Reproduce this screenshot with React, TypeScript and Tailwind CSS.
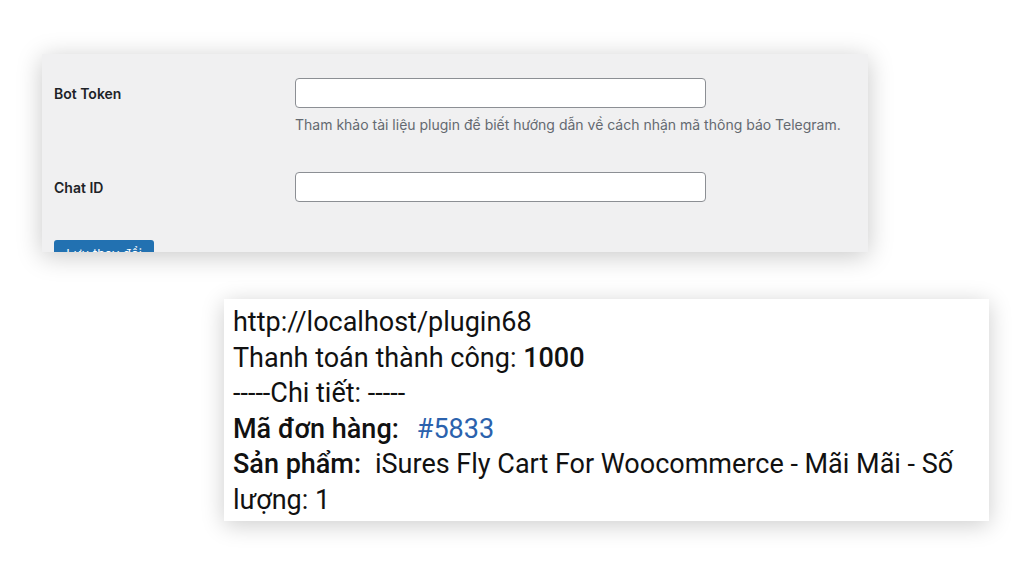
export default function App() {
  return (
    <div className="relative h-[576px] w-[1024px] overflow-hidden bg-white">
      <div className="absolute left-[42px] top-[54px] h-[198px] w-[826px] overflow-hidden bg-[#f0f0f1] px-3 pt-6 shadow-[0_4px_24px_rgba(0,0,0,0.22)] font-['Inter',sans-serif] text-[#1d2327]">
        <div className="flex">
          <div className="flex h-[30px] w-[241px] items-center text-[14px] font-semibold">Bot Token</div>
          <div>
            <div className="h-[30px] w-[411px] rounded-[4px] border border-[#8c8f94] bg-white" />
            <p className="mt-[6px] text-[14px] text-[#646970]">
              Tham khảo tài liệu plugin để biết hướng dẫn về cách nhận mã thông báo Telegram.
            </p>
          </div>
        </div>
        <div className="mt-[37px] flex">
          <div className="flex h-[30px] w-[241px] items-center text-[14px] font-semibold">Chat ID</div>
          <div className="h-[30px] w-[411px] rounded-[4px] border border-[#8c8f94] bg-white" />
        </div>
        <button className="mt-[38px] h-[30px] w-[100px] rounded-[3px] bg-[#2271b1] text-[13px] text-white">
          Lưu thay đổi
        </button>
      </div>

      <div className="absolute left-[224px] top-[299px] h-[222px] w-[765px] bg-white pl-[9px] pt-[6px] shadow-[0_4px_22px_rgba(0,0,0,0.2)] font-['Roboto',sans-serif] text-[27px] leading-[35.6px] text-[#111]">
        <div>http://localhost/plugin68</div>
        <div>
          Thanh toán thành công: <span className="font-medium">1000</span>
        </div>
        <div>-----Chi tiết: -----</div>
        <div>
          <span className="font-medium">Mã đơn hàng:</span>
          <span className="ml-[18px] text-[#2b62ad]">#5833</span>
        </div>
        <div>
          <span className="font-medium">Sản phẩm:</span>
          <span className="ml-[14px]">iSures Fly Cart For Woocommerce - Mãi Mãi - Số lượng: 1</span>
        </div>
      </div>
    </div>
  )
}
